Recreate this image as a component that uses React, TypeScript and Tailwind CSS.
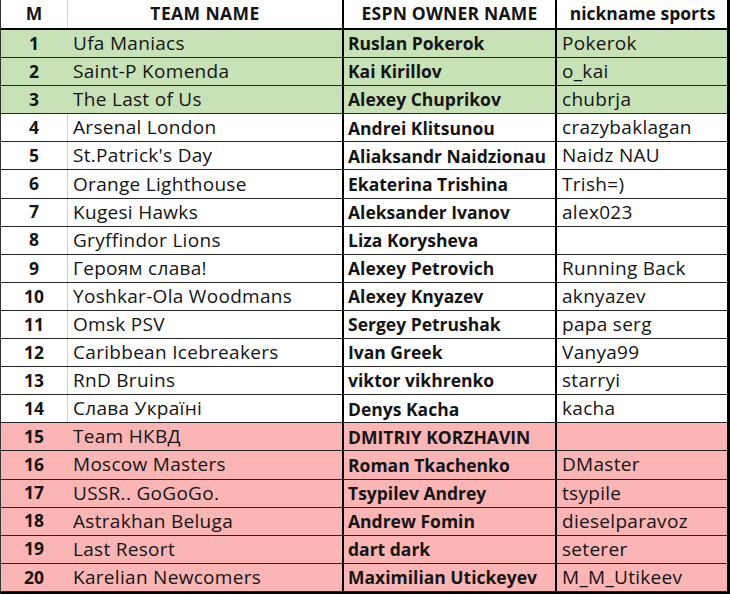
import React from 'react';

type Row = { m: number; team: string; owner: string; nick: string };

const rows: Row[] = [
  { m: 1, team: 'Ufa Maniacs', owner: 'Ruslan Pokerok', nick: 'Pokerok' },
  { m: 2, team: 'Saint-P Komenda', owner: 'Kai Kirillov', nick: 'o_kai' },
  { m: 3, team: 'The Last of Us', owner: 'Alexey Chuprikov', nick: 'chubrja' },
  { m: 4, team: 'Arsenal London', owner: 'Andrei Klitsunou', nick: 'crazybaklagan' },
  { m: 5, team: "St.Patrick's Day", owner: 'Aliaksandr Naidzionau', nick: 'Naidz NAU' },
  { m: 6, team: 'Orange Lighthouse', owner: 'Ekaterina Trishina', nick: 'Trish=)' },
  { m: 7, team: 'Kugesi Hawks', owner: 'Aleksander Ivanov', nick: 'alex023' },
  { m: 8, team: 'Gryffindor Lions', owner: 'Liza Korysheva', nick: '' },
  { m: 9, team: 'Героям слава!', owner: 'Alexey Petrovich', nick: 'Running Back' },
  { m: 10, team: 'Yoshkar-Ola Woodmans', owner: 'Alexey Knyazev', nick: 'aknyazev' },
  { m: 11, team: 'Omsk PSV', owner: 'Sergey Petrushak', nick: 'papa serg' },
  { m: 12, team: 'Caribbean Icebreakers', owner: 'Ivan Greek', nick: 'Vanya99' },
  { m: 13, team: 'RnD Bruins', owner: 'viktor vikhrenko', nick: 'starryi' },
  { m: 14, team: 'Слава Україні', owner: 'Denys Kacha', nick: 'kacha' },
  { m: 15, team: 'Team НКВД', owner: 'DMITRIY KORZHAVIN', nick: '' },
  { m: 16, team: 'Moscow Masters', owner: 'Roman Tkachenko', nick: 'DMaster' },
  { m: 17, team: 'USSR.. GoGoGo.', owner: 'Tsypilev Andrey', nick: 'tsypile' },
  { m: 18, team: 'Astrakhan Beluga', owner: 'Andrew Fomin', nick: 'dieselparavoz' },
  { m: 19, team: 'Last Resort', owner: 'dart dark', nick: 'seterer' },
  { m: 20, team: 'Karelian Newcomers', owner: 'Maximilian Utickeyev', nick: 'M_M_Utikeev' },
];

const rowBg = (m: number) => {
  if (m <= 3) return 'bg-[#c8e2b8]';
  if (m >= 15) return 'bg-[#fbb5b5]';
  return 'bg-white';
};

export default function App() {
  return (
    <div
      className="w-[730px] h-[594px] bg-white text-[#141414] text-[17.5px] leading-none overflow-hidden"
      style={{ fontFamily: '"Open Sans", sans-serif' }}
    >
      <div className="border-l border-l-[#333] border-r-[3px] border-r-black border-b-2 border-b-black">
        {/* header */}
        <div className="grid grid-cols-[67px_276px_213px_171px] h-[30px] border-b-2 border-black font-bold">
          <div className="flex items-center justify-center border-r border-[#d0d0d0]">M</div>
          <div className="flex items-center justify-center border-r-2 border-black tracking-[0.4px]">TEAM NAME</div>
          <div className="flex items-center justify-center border-r-2 border-black tracking-[0.2px]">ESPN OWNER NAME</div>
          <div className="flex items-center justify-center">nickname sports</div>
        </div>
        {rows.map((r) => (
          <div
            key={r.m}
            className={`grid grid-cols-[67px_276px_213px_171px] h-[28.1px] border-b border-[#262626] ${rowBg(r.m)}`}
          >
            <div
              className={`flex items-center justify-center font-bold border-r ${
                r.m <= 3 || r.m >= 15 ? 'border-transparent' : 'border-[#d0d0d0]'
              }`}
            >
              {r.m}
            </div>
            <div className="flex items-center pl-[5px] border-r-2 border-black whitespace-nowrap text-[19px] tracking-[0.3px]">
              {r.team}
            </div>
            <div className="flex items-center pl-[4px] pt-[1px] border-r-2 border-black font-bold whitespace-nowrap">
              {r.owner}
            </div>
            <div className="flex items-center pl-[5px] whitespace-nowrap text-[19px] tracking-[0.3px]">{r.nick}</div>
          </div>
        ))}
      </div>
    </div>
  );
}
